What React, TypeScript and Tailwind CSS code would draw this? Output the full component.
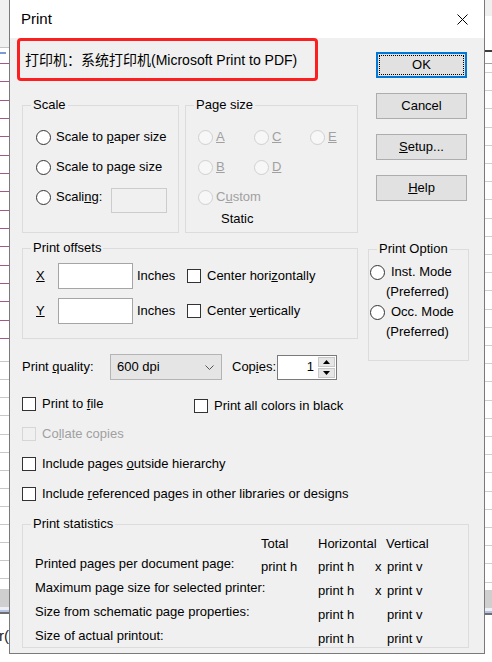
import { ReactNode } from "react";

function Radio({ disabled }: { disabled?: boolean }) {
  return (
    <span
      className={
        "inline-block w-[15px] h-[15px] shrink-0 rounded-full border " +
        (disabled ? "border-[#d0d0d0] bg-[#f7f7f7]" : "border-[#333333] bg-white")
      }
    />
  );
}

function Check({ disabled }: { disabled?: boolean }) {
  return (
    <span
      className={
        "inline-block w-[14px] h-[14px] shrink-0 border " +
        (disabled ? "border-[#d6d6d6] bg-[#f0f0f0]" : "border-[#333333] bg-white")
      }
    />
  );
}

function Group({
  label,
  className,
  children,
}: {
  label: string;
  className: string;
  children: ReactNode;
}) {
  return (
    <fieldset className={"min-w-0 shrink-0 border border-[#dcdcdc] " + className}>
      <legend className="ml-[8px] px-[2px] text-[13px] leading-[16px]">{label}</legend>
      {children}
    </fieldset>
  );
}

function Button({ children, focused }: { children: ReactNode; focused?: boolean }) {
  return (
    <div
      className={
        "w-[91px] h-[26px] flex items-center justify-center bg-[#e1e1e1] text-[13px] " +
        (focused
          ? "border-2 border-[#0078d7] outline-1 outline-dotted outline-black outline-offset-[-4px]"
          : "border border-[#adadad]")
      }
    >
      {children}
    </div>
  );
}

function CheckRow({
  children,
  disabled,
  className,
}: {
  children: ReactNode;
  disabled?: boolean;
  className?: string;
}) {
  return (
    <div className={"flex items-center h-[20px] " + (className ?? "")}>
      <Check disabled={disabled} />
      <span className={"ml-[6px] whitespace-nowrap " + (disabled ? "text-[#a0a0a0]" : "")}>
        {children}
      </span>
    </div>
  );
}

const stats = [
  ["Printed pages per document page:", "print h", "print h", "x", "print v"],
  ["Maximum page size for selected printer:", "", "print h", "x", "print v"],
  ["Size from schematic page properties:", "", "print h", "", "print v"],
  ["Size of actual printout:", "", "print h", "", "print v"],
];

function LeftStrip() {
  return (
    <div className="w-[9px] h-[662px] shrink-0 flex flex-col overflow-hidden bg-white">
      <div className="h-[47px] bg-[#f0f0f0]" />
      <div className="h-[1px] bg-[#c4c4c4]" />
      <div className="h-[15px] pt-[4px]">
        <div className="h-[2px] w-[6px] bg-[#7c9ad6]" />
      </div>
      <div className="h-[281px] bg-[repeating-linear-gradient(to_bottom,#a3588c_0,#a3588c_1px,transparent_1px,transparent_18.33px)]" />
      <div className="h-[245px] bg-[repeating-linear-gradient(to_bottom,transparent_0,transparent_17.1px,#c8c8c8_17.1px,#c8c8c8_18.1px)]" />
      <div className="h-[18px] bg-[#cfcfcf]" />
      <div className="h-[3px] bg-[#eef0f8]" />
      <div className="h-[2px] bg-[#b4c2e6]" />
      <div className="h-[2px] bg-[#6e6e6e]" />
      <div className="pt-[13px] -ml-[1px] text-[15px] leading-[18px] text-[#222222] whitespace-nowrap">
        r(
      </div>
    </div>
  );
}

function RightStrip() {
  return (
    <div className="w-[7px] h-[662px] shrink-0 flex flex-col overflow-hidden bg-white">
      <div className="h-[16px] bg-[#f0f0f0]" />
      <div className="h-[34px]" />
      <div className="h-[2px] bg-[#3c3c3c]" />
      <div className="h-[11px]" />
      <div className="h-[1px] bg-[#a0a0a0]" />
      <div className="h-[8px]" />
      <div className="h-[518px] bg-[repeating-linear-gradient(to_bottom,#cfcfcf_0,#cfcfcf_1px,transparent_1px,transparent_18.2px)]" />
      <div className="h-[18px] bg-[#cfcfcf]" />
      <div className="h-[3px] bg-[#eef0f8]" />
      <div className="h-[2px] bg-[#b4c2e6]" />
      <div className="h-[2px] bg-[#6e6e6e]" />
    </div>
  );
}

export default function App() {
  return (
    <div className="w-[492px] h-[662px] flex overflow-hidden bg-white text-black text-[13px] leading-[16px] font-['Liberation_Sans','Noto_Sans_CJK_SC',sans-serif]">
      <LeftStrip />

      <div className="w-[476px] h-[654px] shrink-0 flex flex-col border-x border-b border-[#7a7a7a]">
        {/* title bar */}
        <div className="h-[38px] shrink-0 bg-white flex items-center justify-between pl-[11px] pr-[16px]">
          <span className="text-[15px]">Print</span>
          <svg width="11" height="11" viewBox="0 0 11 11">
            <path d="M0.5 0.5 L10.5 10.5 M10.5 0.5 L0.5 10.5" stroke="#000" strokeWidth="1" />
          </svg>
        </div>

        <div className="flex-1 bg-[#f0f0f0] flex flex-col">
          {/* printer + scale / page size + buttons */}
          <div className="flex items-start">
            <div className="ml-[7px] w-[346px] flex flex-col">
              <div className="w-[301px] h-[43px] border-[3px] border-[#fb1f1f] rounded-[4px] flex items-center pl-[5px] text-[14px] whitespace-nowrap">
                打印机：系统打印机(Microsoft Print to PDF)
              </div>
              <div className="flex mt-[16px] ml-[5px]">
                <Group label="Scale" className="w-[157px] h-[136px]">
                  <div className="flex flex-col pt-[9px] pl-[13px]">
                    <div className="flex items-center h-[30px]">
                      <Radio />
                      <span className="ml-[5px]">
                        Scale to <u>p</u>aper size
                      </span>
                    </div>
                    <div className="flex items-center h-[30px]">
                      <Radio />
                      <span className="ml-[5px]">Scale to page size</span>
                    </div>
                    <div className="flex items-center h-[30px]">
                      <Radio />
                      <span className="ml-[5px] w-[55px]">
                        Scali<u>n</u>g:
                      </span>
                      <div className="w-[56px] h-[25px] mt-[7px] border border-[#cccccc] bg-[#f0f0f0]" />
                    </div>
                  </div>
                </Group>
                <Group label="Page size" className="ml-[6px] w-[173px] h-[136px]">
                  <div className="flex flex-col pt-[9px] pl-[12px] text-[#a0a0a0]">
                    <div className="flex h-[30px] items-center">
                      <div className="w-[56px] flex items-center">
                        <Radio disabled />
                        <u className="ml-[3px]">A</u>
                      </div>
                      <div className="w-[56px] flex items-center">
                        <Radio disabled />
                        <u className="ml-[3px]">C</u>
                      </div>
                      <div className="flex items-center">
                        <Radio disabled />
                        <u className="ml-[3px]">E</u>
                      </div>
                    </div>
                    <div className="flex h-[30px] items-center">
                      <div className="w-[56px] flex items-center">
                        <Radio disabled />
                        <u className="ml-[3px]">B</u>
                      </div>
                      <div className="flex items-center">
                        <Radio disabled />
                        <u className="ml-[3px]">D</u>
                      </div>
                    </div>
                    <div className="flex h-[30px] items-center">
                      <Radio disabled />
                      <span className="ml-[3px]">
                        C<u>u</u>stom
                      </span>
                    </div>
                    <div className="-mt-[1px] h-[16px] pl-[23px] text-black">Static</div>
                  </div>
                </Group>
              </div>
            </div>

            <div className="ml-[13px] mt-[14px] flex flex-col gap-[15px]">
              <Button focused>OK</Button>
              <Button>Cancel</Button>
              <Button>
                <span>
                  <u>S</u>etup...
                </span>
              </Button>
              <Button>
                <span>
                  <u>H</u>elp
                </span>
              </Button>
            </div>
          </div>

          {/* offsets / print option / quality */}
          <div className="flex items-start mt-[7px]">
            <div className="flex flex-col">
              <Group label="Print offsets" className="ml-[12px] w-[336px] h-[99px]">
                <div className="flex flex-col pt-[7px] pl-[13px]">
                  <div className="flex items-center h-[26px]">
                    <u className="w-[22px] no-underline">
                      <u>X</u>
                    </u>
                    <div className="w-[75px] h-[26px] border border-[#a5a5a5] bg-white" />
                    <span className="ml-[4px] w-[50px]">Inches</span>
                    <Check />
                    <span className="ml-[6px] whitespace-nowrap">
                      Center hori<u>z</u>ontally
                    </span>
                  </div>
                  <div className="flex items-center h-[26px] mt-[9px]">
                    <span className="w-[22px]">
                      <u>Y</u>
                    </span>
                    <div className="w-[75px] h-[26px] border border-[#a5a5a5] bg-white" />
                    <span className="ml-[4px] w-[50px]">Inches</span>
                    <Check />
                    <span className="ml-[6px] whitespace-nowrap">
                      Center <u>v</u>ertically
                    </span>
                  </div>
                </div>
              </Group>

              <div className="ml-[12px] mt-[15px] flex items-center h-[26px]">
                <span className="w-[88px]">
                  Print <u>q</u>uality:
                </span>
                <div className="w-[112px] h-[26px] border border-[#b4b4b4] bg-[#e5e5e5] flex items-center justify-between pl-[6px] pr-[7px]">
                  <span>600 dpi</span>
                  <svg width="9" height="5" viewBox="0 0 9 5">
                    <path d="M0.5 0.5 L4.5 4.5 L8.5 0.5" fill="none" stroke="#555" strokeWidth="1" />
                  </svg>
                </div>
                <span className="ml-[10px] w-[45px]">
                  Cop<u>i</u>es:
                </span>
                <div className="w-[60px] h-[25px] border border-[#7a7a7a] bg-white flex">
                  <span className="flex-1 flex items-center justify-end pr-[3px]">1</span>
                  <div className="w-[19px] flex flex-col gap-[1px] p-[1px]">
                    <div className="flex-1 bg-[#e6e6e6] border border-[#c8c8c8] flex items-center justify-center">
                      <svg width="7" height="4" viewBox="0 0 7 4">
                        <path d="M0 4 L3.5 0 L7 4 Z" fill="#000" />
                      </svg>
                    </div>
                    <div className="flex-1 bg-[#e6e6e6] border border-[#c8c8c8] flex items-center justify-center">
                      <svg width="7" height="4" viewBox="0 0 7 4">
                        <path d="M0 0 L3.5 4 L7 0 Z" fill="#000" />
                      </svg>
                    </div>
                  </div>
                </div>
              </div>
            </div>

            <Group label="Print Option" className="ml-[10px] mt-[1px] w-[101px] h-[120px]">
              <div className="flex flex-col pt-[5px]">
                <div className="flex items-center h-[20px] pl-[1px]">
                  <Radio />
                  <span className="ml-[6px] whitespace-nowrap">Inst. Mode</span>
                </div>
                <div className="h-[20px] pl-[17px] flex">
                  <span className="w-[84px] bg-[#f0f0f0] flex items-center">(Preferred)</span>
                </div>
                <div className="flex items-center h-[20px] pl-[1px]">
                  <Radio />
                  <span className="ml-[6px] whitespace-nowrap">Occ. Mode</span>
                </div>
                <div className="h-[20px] pl-[17px] flex">
                  <span className="w-[84px] bg-[#f0f0f0] flex items-center">(Preferred)</span>
                </div>
              </div>
            </Group>
          </div>

          {/* check boxes */}
          <div className="flex items-start ml-[12px] mt-[14px]">
            <CheckRow className="w-[172px]">
              Print to <u>f</u>ile
            </CheckRow>
            <CheckRow className="mt-[2px]">Print all colors in black</CheckRow>
          </div>
          <CheckRow disabled className="ml-[12px] mt-[8px]">
            Co<u>l</u>late copies
          </CheckRow>
          <CheckRow className="ml-[12px] mt-[10px]">
            Include pages <u>o</u>utside hierarchy
          </CheckRow>
          <CheckRow className="ml-[12px] mt-[10px]">
            Include <u>r</u>eferenced pages in other libraries or designs
          </CheckRow>

          {/* statistics */}
          <Group label="Print statistics" className="ml-[12px] mt-[12px] w-[447px] h-[132px]">
            <div className="flex flex-col pt-[4px] pl-[12px]">
              <div className="flex h-[16px] items-center pl-[226px]">
                <span className="w-[57px]">Total</span>
                <span className="w-[68px]">Horizontal</span>
                <span>Vertical</span>
              </div>
              {stats.map((r) => (
                <div key={r[0]} className="flex h-[24px] items-center">
                  <span className="w-[226px] shrink-0 whitespace-nowrap">{r[0]}</span>
                  <span className="w-[57px] mt-[6px]">{r[1]}</span>
                  <span className="w-[57px] mt-[6px]">{r[2]}</span>
                  <span className="w-[12px] mt-[6px]">{r[3]}</span>
                  <span className="mt-[6px]">{r[4]}</span>
                </div>
              ))}
            </div>
          </Group>
        </div>
      </div>

      <RightStrip />
    </div>
  );
}
